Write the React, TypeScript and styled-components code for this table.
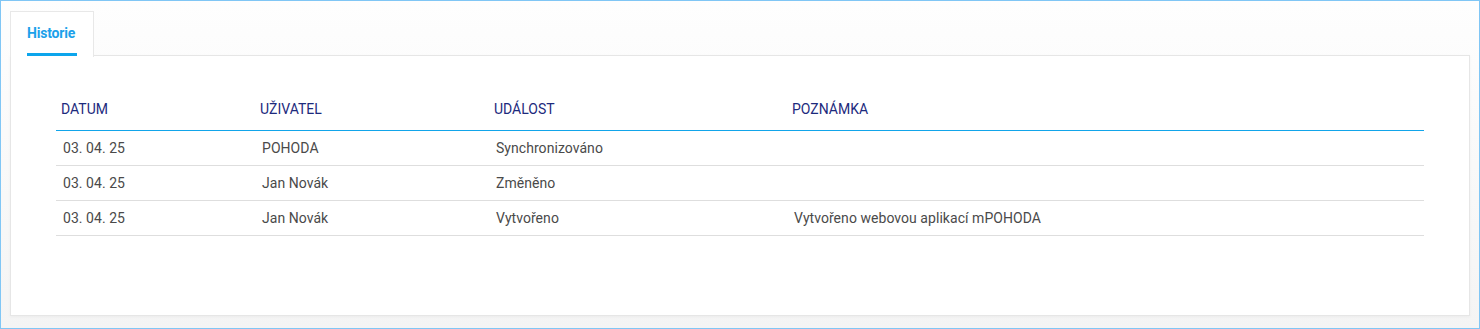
import styled, { createGlobalStyle } from "styled-components";

const GlobalStyle = createGlobalStyle`
  html, body {
    margin: 0;
    padding: 0;
  }
  body {
    font-family: Roboto, "Liberation Sans", Arial, sans-serif;
  }
`;

const rows = [
  { date: "03. 04. 25", user: "POHODA", event: "Synchronizováno", note: "" },
  { date: "03. 04. 25", user: "Jan Novák", event: "Změněno", note: "" },
  {
    date: "03. 04. 25",
    user: "Jan Novák",
    event: "Vytvořeno",
    note: "Vytvořeno webovou aplikací mPOHODA",
  },
];

const columns = [
  { title: "Datum", width: 199 },
  { title: "Uživatel", width: 234 },
  { title: "Událost", width: 298 },
  { title: "Poznámka", width: undefined },
];

const App = () => {
  return (
    <>
      <GlobalStyle />
      <Frame>
        <TabBar>
          <Tab $active>Historie</Tab>
        </TabBar>
        <Panel>
          <Table>
            <colgroup>
              {columns.map((c) => (
                <col key={c.title} style={c.width ? { width: c.width } : undefined} />
              ))}
            </colgroup>
            <thead>
              <tr>
                {columns.map((c) => (
                  <Th key={c.title}>{c.title}</Th>
                ))}
              </tr>
            </thead>
            <tbody>
              {rows.map((r, i) => (
                <tr key={i}>
                  <Td>{r.date}</Td>
                  <Td>{r.user}</Td>
                  <Td>{r.event}</Td>
                  <Td>{r.note}</Td>
                </tr>
              ))}
            </tbody>
          </Table>
        </Panel>
      </Frame>
    </>
  );
};
export default App;

const Frame = styled.div`
  box-sizing: border-box;
  width: 1480px;
  height: 329px;
  border: 1px solid #80c6f5;
  padding: 10px 9px 12px 9px;
  background: linear-gradient(#fefefe, #f4f4f4);
  display: flex;
  flex-direction: column;
`;

const TabBar = styled.div`
  display: flex;
  height: 45px;
  margin-bottom: -1px;
  position: relative;
  z-index: 1;
`;

const Tab = styled.div<{ $active?: boolean }>`
  box-sizing: border-box;
  width: 84px;
  height: 46px;
  padding: 0 0 4px 16px;
  display: flex;
  align-items: center;
  position: relative;
  background: #fff;
  border: 1px solid #e8e8e8;
  border-bottom: none;
  color: #1ba1ea;
  font-size: 14px;
  font-weight: 700;
  letter-spacing: -0.2px;

  &::after {
    content: "";
    position: absolute;
    left: 16px;
    width: 50px;
    bottom: 1px;
    height: 3px;
    background: ${(p) => (p.$active ? "#0ca5ec" : "transparent")};
  }
`;

const Panel = styled.div`
  flex: 1;
  background: #fff;
  border: 1px solid #e6e6e6;
  padding: 32px 45px 0 45px;
  box-shadow: 0 1px 3px rgba(0, 0, 0, 0.04);
`;

const Table = styled.table`
  width: 100%;
  border-collapse: collapse;
  table-layout: fixed;
`;

const Th = styled.th`
  box-sizing: border-box;
  height: 42px;
  padding: 0 5px;
  text-align: left;
  vertical-align: middle;
  font-weight: 400;
  font-size: 14px;
  text-transform: uppercase;
  color: #1d2a7d;
  border-bottom: 1px solid #12a5ea;
`;

const Td = styled.td`
  box-sizing: border-box;
  height: 35px;
  padding: 0 7px;
  font-size: 14px;
  letter-spacing: 0.05px;
  color: #4a4a4a;
  vertical-align: middle;
  border-bottom: 1px solid #dedede;
  white-space: nowrap;
`;
